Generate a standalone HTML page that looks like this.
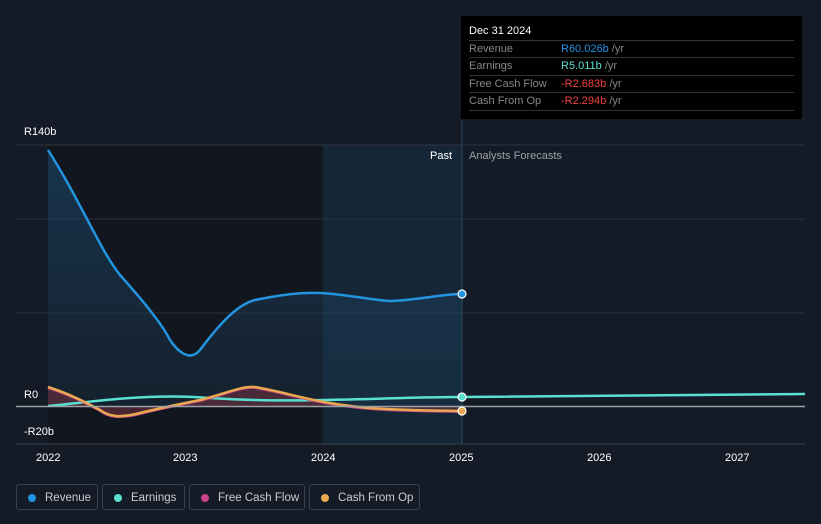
<!DOCTYPE html>
<html><head><style>
body{margin:0;width:821px;height:524px;background:#151b26;font-family:"Liberation Sans",sans-serif;overflow:hidden;position:relative}
.t{position:absolute;font-size:11px;color:#fff}
.tip{position:absolute;left:461px;top:16px;width:341px;height:103px;background:#000;}
.tip .h{position:absolute;left:8px;top:9px;color:#fff;font-size:11px}
.row{position:absolute;left:8px;width:325px;border-top:1px solid #333;height:17px;font-size:11px;color:#888;line-height:17px}
.row span{position:absolute;left:92px}
.leg{position:absolute;top:484px;height:26px;border:1px solid #3a404a;border-radius:3px;font-size:11.5px;color:#ccc;line-height:26px;box-sizing:border-box}
.leg i{position:absolute;left:11px;top:9px;width:8px;height:8px;border-radius:50%}
.leg b{font-weight:normal;position:absolute;left:28px}
</style></head><body>
<svg width="821" height="524" style="position:absolute;left:0;top:0">
<defs><linearGradient id="g" x1="0" y1="0" x2="0" y2="1"><stop offset="0" stop-color="#1b4a6e" stop-opacity=".6"/><stop offset="1" stop-color="#1b3a55" stop-opacity=".3"/></linearGradient></defs>
<rect x="48" y="145" width="275" height="299" fill="#12161e"/>
<rect x="323" y="145" width="139" height="299" fill="#152636"/>
<line x1="16" y1="145" x2="805" y2="145" stroke="#2e343e"/>
<line x1="16" y1="219" x2="805" y2="219" stroke="#2a303a"/>
<line x1="16" y1="313" x2="805" y2="313" stroke="#2a303a"/>
<line x1="16" y1="444" x2="805" y2="444" stroke="#3a404a"/>
<line x1="462" y1="120" x2="462" y2="444" stroke="#2a4a66"/>
<path d="M48,150 C80,200 100,250 120,275 C135,292 160,320 170,340 C178,352 190,362 200,350 C215,330 235,305 255,300 C280,295 300,292 320,293 C345,294 370,300 390,301 C420,300 440,294 462,294 L462,406 L48,406 Z" fill="url(#g)"/>
<path d="M48,150 C80,200 100,250 120,275 C135,292 160,320 170,340 C178,352 190,362 200,350 C215,330 235,305 255,300 C280,295 300,292 320,293 C345,294 370,300 390,301 C420,300 440,294 462,294" fill="none" stroke="#2394df" stroke-width="2.5"/>
<path d="M48,387 C70,395 85,403 100,410 C110,417 120,418 140,413 C160,408 175,405 200,400 C225,394 240,386 255,387 C280,391 300,398 330,403 C360,408 380,410 462,411 L462,406 L48,406Z" fill="#6e3040" opacity=".6"/>
<path d="M48,406 C80,403 100,400 130,398 C160,396 185,396 210,398 C240,400 280,401 323,400 C380,399 420,397 462,397 L805,394" fill="none" stroke="#58e0d0" stroke-width="2.5"/>
<path d="M48,388 C70,395 85,403 100,411 C110,418 120,419 140,414 C160,409 175,406 200,401 C225,395 240,387 255,388 C280,392 300,399 330,404 C360,409 380,411 462,412" fill="none" stroke="#c8448a" stroke-width="2"/>
<path d="M48,387 C70,394 85,402 100,410 C110,417 120,418 140,413 C160,408 175,405 200,400 C225,394 240,386 255,387 C280,391 300,398 330,403 C360,408 380,410 462,411" fill="none" stroke="#e8a850" stroke-width="2.5"/>
<line x1="16" y1="406.5" x2="805" y2="406.5" stroke="#9aa0a8" stroke-width="1.5"/>
<circle cx="462" cy="294" r="4" fill="#2394df" stroke="#fff" stroke-width="1.2"/>
<circle cx="462" cy="397" r="4" fill="#58e0d0" stroke="#fff" stroke-width="1.2"/>
<circle cx="462" cy="411" r="4" fill="#e8a850" stroke="#fff" stroke-width="1.2"/>
</svg>
<div class="t" style="left:24px;top:126px">R140b</div>
<div class="t" style="left:24px;top:389px">R0</div>
<div class="t" style="left:24px;top:426px">-R20b</div>
<div class="t" style="left:430px;top:150px">Past</div>
<div class="t" style="left:469px;top:150px;color:#9aa0a8">Analysts Forecasts</div>
<div class="t" style="left:36px;top:452px">2022</div>
<div class="t" style="left:173px;top:452px">2023</div>
<div class="t" style="left:311px;top:452px">2024</div>
<div class="t" style="left:449px;top:452px">2025</div>
<div class="t" style="left:587px;top:452px">2026</div>
<div class="t" style="left:725px;top:452px">2027</div>
<div class="tip"><div class="h">Dec 31 2024</div>
<div class="row" style="top:24px">Revenue<span><font color="#2394df">R60.026b</font> /yr</span></div>
<div class="row" style="top:41px">Earnings<span><font color="#58e0d0">R5.011b</font> /yr</span></div>
<div class="row" style="top:59px">Free Cash Flow<span><font color="#f04040">-R2.683b</font> /yr</span></div>
<div class="row" style="top:76px">Cash From Op<span><font color="#f04040">-R2.294b</font> /yr</span></div>
<div class="row" style="top:94px;height:0"></div>
</div>
<div class="leg" style="left:16px;width:82px"><i style="background:#2394df"></i><b>Revenue</b></div>
<div class="leg" style="left:102px;width:83px"><i style="background:#58e0d0"></i><b>Earnings</b></div>
<div class="leg" style="left:189px;width:116px"><i style="background:#c8448a"></i><b>Free Cash Flow</b></div>
<div class="leg" style="left:309px;width:111px"><i style="background:#e8a850"></i><b>Cash From Op</b></div>
</body></html>
